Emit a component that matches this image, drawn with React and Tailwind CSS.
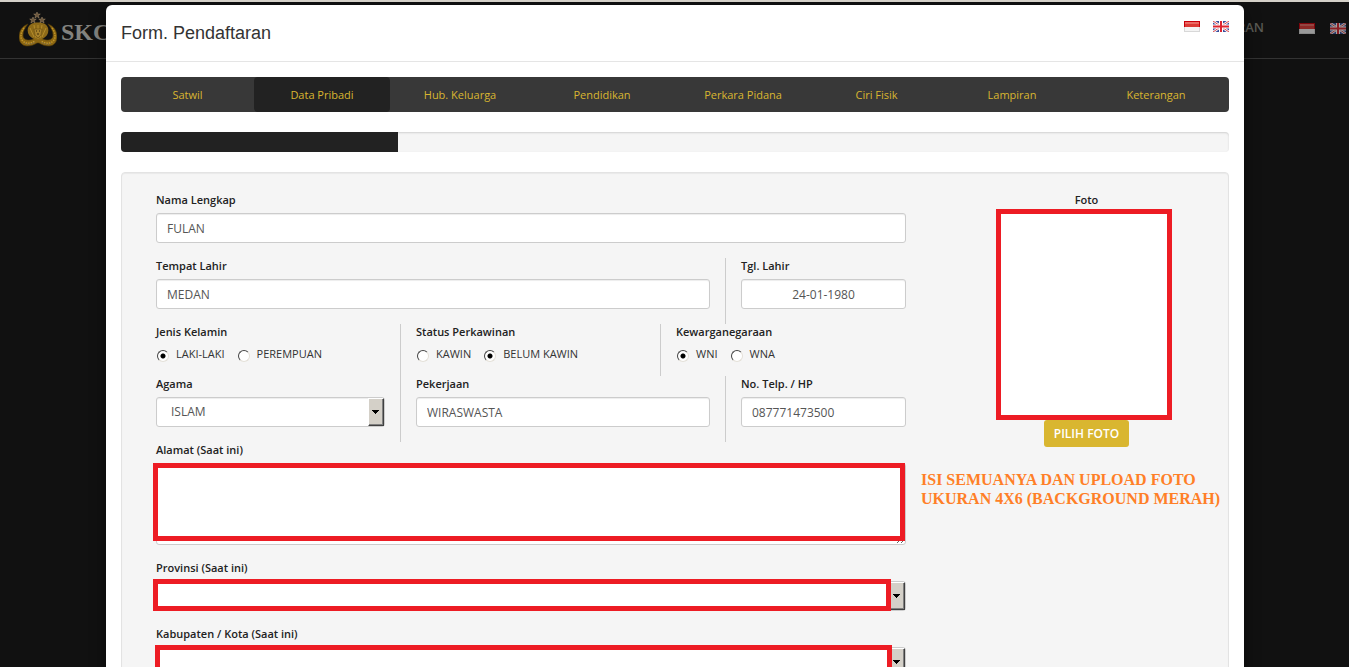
import { useState } from 'react';

const TABS = [
  'Satwil',
  'Data Pribadi',
  'Hub. Keluarga',
  'Pendidikan',
  'Perkara Pidana',
  'Ciri Fisik',
  'Lampiran',
  'Keterangan',
];

const INPUT =
  'block h-[30px] w-full rounded-[3px] border border-[#ccc] bg-white px-2.5 text-[12px] text-[#555] shadow-[inset_0_1px_1px_rgba(0,0,0,0.075)] outline-none';

const FlagId = () => (
  <svg className="h-[11px] w-4" viewBox="0 0 16 11">
    <rect width="16" height="11" fill="#f4f4f4" />
    <rect width="16" height="6" fill="#c8000a" />
    <rect x="1" y="1" width="14" height="5" fill="#dc3a34" />
    <rect x="1" y="1" width="14" height="2" fill="#ea6a64" />
    <path d="M0 10.5h16M15.5 6v5M.5 6v5" stroke="#d8d8d8" />
  </svg>
);

const FlagUk = () => (
  <svg className="h-[11px] w-4" viewBox="0 0 16 11">
    <rect width="16" height="11" fill="#3a4f9c" />
    <path d="M0 0l16 11M16 0L0 11" stroke="#fff" strokeWidth="2.6" />
    <path d="M0 0l16 11M16 0L0 11" stroke="#d8474d" strokeWidth="1" />
    <path d="M8 0v11M0 5.5h16" stroke="#fff" strokeWidth="4" />
    <path d="M8 0v11M0 5.5h16" stroke="#dc2530" strokeWidth="2" />
  </svg>
);

const Emblem = () => (
  <svg className="h-9 w-[38px]" viewBox="0 0 38 36">
    {/* stars */}
    <g fill="#6b563c" stroke="#a08a6a" strokeWidth="0.5">
      <path d="M18 0l.9 2.100h2.400l-1.900 1.500.7 2.300L18 4.600l-2.100 1.300.7-2.300-1.900-1.500h2.400z" />
      <path d="M14 5l.9 2.100h2.400l-1.900 1.500.7 2.300L14 9.600l-2.100 1.300.7-2.300-1.900-1.500h2.400z" />
      <path d="M23 5l.9 2.100h2.400l-1.900 1.500.7 2.300L23 9.600l-2.100 1.300.7-2.300-1.900-1.500h2.400z" />
    </g>
    {/* wreath */}
    <path
      d="M9 12C3 14 0 19 0 25c0 6 4 9 8 9 4 0 7-1 10-3h2c3 2 6 3 10 3 4 0 8-3 8-9 0-6-3-11-9-13 3 4 5 7 5 11 0 4-3 5-6 5-3 0-5-2-9-2s-6 2-9 2-6-1-6-5c0-4 2-7 5-11z"
      fill="#8a6512"
      stroke="#4a3608"
      strokeWidth="0.6"
    />
    <path
      d="M5 16c-3 4-4 9-2 12 3 4 8 4 13 1M33 16c3 4 4 9 2 12-3 4-8 4-13 1"
      fill="none"
      stroke="#c09428"
      strokeWidth="1.500"
      strokeDasharray="1.500 1"
    />
    <path d="M6 31c3 2 7 1 10-1M32 31c-3 2-7 1-10-1" fill="none" stroke="#7d7460" strokeDasharray="1 1" />
    {/* shield */}
    <path d="M12 12c4-2 10-2 14 0 3 2 4 5 3 9-1 3-4 6-10 7-6-1-9-4-10-7-1-4 0-7 3-9z" fill="#8d6a18" />
    <path d="M19 13v14M15 13l2 13M23 13l-2 13M11 16l4 9M27 16l-4 9" stroke="#b8902c" strokeWidth="0.900" />
    <path d="M15 17h8l-1 6-3 3-3-3z" fill="#a8822a" stroke="#5a4210" strokeWidth="0.500" />
    <path d="M17 19h1M20 19h1M18 22h2" stroke="#3a2a06" />
  </svg>
);

const Field = ({ id, label, className, children }) => (
  <div className={`px-[15px] pb-[15px] ${className}`}>
    <label htmlFor={id} className="mb-[5px] block font-semibold leading-4 text-[#222]">
      {label}
    </label>
    {children}
  </div>
);

const SelectBox = ({ id, options }) => (
  <div className="relative">
    <select id={id} className={`${INPUT} appearance-none px-3.5`}>
      {options.map((o) => (
        <option key={o}>{o}</option>
      ))}
    </select>
    <span className="pointer-events-none absolute inset-y-px right-px flex w-4 items-center justify-center border border-t-white border-l-white border-r-[#404040] border-b-[#404040] bg-[#d4d0c8] pr-px shadow-[inset_-1px_-1px_0_#808080]">
      <svg className="h-1 w-[7px]" viewBox="0 0 7 4">
        <path d="M0 0h7v1H6v1H5v1H4v1H3V3H2V2H1V1H0z" />
      </svg>
    </span>
  </div>
);

const RadioGroup = ({ name, label, options, initial, className }) => {
  const [value, setValue] = useState(initial);

  return (
    <div className={`h-[52px] px-[15px] ${className}`}>
      <fieldset>
        <legend className="block font-semibold leading-4 text-[#222]">{label}</legend>
        <div className="flex gap-[13px] pt-1.5 pl-px">
          {options.map((o) => (
            <label key={o} className="flex items-center gap-[7px] leading-4 whitespace-nowrap text-[#333]">
              <input
                type="radio"
                name={name}
                checked={value === o}
                onChange={() => setValue(o)}
                className="mt-[3px] size-3 appearance-none rounded-full border border-t-[#444] border-r-[#e4e0d8] border-b-[#e4e0d8] border-l-[#444] bg-white checked:bg-[radial-gradient(circle,#000_2px,transparent_3px)]"
              />
              {o}
            </label>
          ))}
        </div>
      </fieldset>
    </div>
  );
};

const SiteHeader = () => (
  <header className="flex h-[57px] items-center justify-between border-b border-[#333] pl-[19px] pr-[3px]">
    <a href="#beranda" className="flex items-center gap-1">
      <Emblem />
      <span className="w-14 overflow-hidden pt-1 font-['Liberation_Serif',serif] text-[24px] font-bold text-[#83837f]">
        SKCK
      </span>
    </a>
    <nav className="flex items-center gap-[15px] pb-1">
      <a href="#pendaftaran" className="mr-5 text-[13px] font-semibold text-[#5a5a54]">
        PENDAFTARAN
      </a>
      <button type="button" aria-label="Bahasa Indonesia" className="opacity-60">
        <FlagId />
      </button>
      <button type="button" aria-label="English" className="opacity-60">
        <FlagUk />
      </button>
    </nav>
  </header>
);

const PersonalForm = () => (
  <div className="grid grid-cols-12">
    <Field id="nama" label="Nama Lengkap" className="col-span-12">
      <input id="nama" className={INPUT} defaultValue="FULAN" />
    </Field>

    <Field id="tempat" label="Tempat Lahir" className="col-span-9 border-r border-[#ccc]">
      <input id="tempat" className={INPUT} defaultValue="MEDAN" />
    </Field>
    <Field id="tanggal" label="Tgl. Lahir" className="col-span-3">
      <input id="tanggal" className={`${INPUT} text-center`} defaultValue="24-01-1980" />
    </Field>

    <RadioGroup
      name="kelamin"
      label="Jenis Kelamin"
      options={['LAKI-LAKI', 'PEREMPUAN']}
      initial="LAKI-LAKI"
      className="col-span-4 border-r border-[#ccc]"
    />
    <RadioGroup
      name="status"
      label="Status Perkawinan"
      options={['KAWIN', 'BELUM KAWIN']}
      initial="BELUM KAWIN"
      className="col-span-4 border-r border-[#ccc]"
    />
    <RadioGroup
      name="warga"
      label="Kewarganegaraan"
      options={['WNI', 'WNA']}
      initial="WNI"
      className="col-span-4"
    />

    <Field id="agama" label="Agama" className="col-span-4 border-r border-[#ccc]">
      <SelectBox id="agama" options={['ISLAM', 'KRISTEN', 'KATOLIK', 'HINDU', 'BUDHA']} />
    </Field>
    <Field id="pekerjaan" label="Pekerjaan" className="col-span-5 border-r border-[#ccc]">
      <input id="pekerjaan" className={INPUT} defaultValue="WIRASWASTA" />
    </Field>
    <Field id="telp" label="No. Telp. / HP" className="col-span-3">
      <input id="telp" className={INPUT} defaultValue="087771473500" />
    </Field>

    <Field id="alamat" label="Alamat (Saat ini)" className="col-span-12">
      <div className="relative">
        <textarea id="alamat" className={`${INPUT} h-[82px] resize-y`} />
        <span className="pointer-events-none absolute top-0 right-px bottom-1 -left-[3px] border-5 border-[#ed1c24]" />
      </div>
    </Field>
    <Field id="provinsi" label="Provinsi (Saat ini)" className="col-span-12">
      <div className="relative">
        <SelectBox id="provinsi" options={['']} />
        <span className="pointer-events-none absolute -top-0.5 right-[15px] bottom-0 -left-[3px] border-5 border-[#ed1c24]" />
      </div>
    </Field>
    <Field id="kota" label="Kabupaten / Kota (Saat ini)" className="col-span-12">
      <div className="relative">
        <SelectBox id="kota" options={['']} />
        <span className="pointer-events-none absolute -top-0.5 right-3.5 bottom-0 -left-px border-5 border-[#ed1c24]" />
      </div>
    </Field>
  </div>
);

const PhotoPanel = () => (
  <div>
    <div className="flex flex-col items-center pl-6">
      <span className="font-semibold leading-4 text-[#222]">Foto</span>
      <div className="mt-px mr-1.5 h-[211px] w-44 border-5 border-[#ed1c24] bg-white" />
      <button type="button" className="h-[27px] rounded-[3px] bg-[#d9b630] px-2.5 text-[12px] font-semibold text-white">
        PILIH FOTO
      </button>
    </div>
    <p className="mt-[23px] font-['Liberation_Serif',serif] text-[16px] font-bold leading-[19px] whitespace-nowrap text-[#ff7f27]">
      ISI SEMUANYA DAN UPLOAD FOTO
      <br />
      UKURAN 4X6 (BACKGROUND MERAH)
    </p>
  </div>
);

export default function App() {
  const [active, setActive] = useState('Data Pribadi');

  return (
    <div className="relative h-screen overflow-hidden border-t-2 border-[#d4d0c8] bg-[#111] font-['Open_Sans',sans-serif] text-[11px]">
      <SiteHeader />

      <div className="absolute inset-0 overflow-hidden pt-[3px] pr-[105px] pl-[106px]">
        <div role="dialog" aria-labelledby="judul" className="rounded-t-md bg-white shadow-[0_5px_15px_rgba(0,0,0,0.5)]">
          <div className="flex h-[57px] items-center justify-between border-b border-[#e5e5e5] px-[15px]">
            <h1 id="judul" className="font-['Liberation_Sans',sans-serif] text-[18px] text-[#333]">
              Form. Pendaftaran
            </h1>
            <div className="mb-3.5 flex gap-[13px]">
              <button type="button" aria-label="Bahasa Indonesia">
                <FlagId />
              </button>
              <button type="button" aria-label="English">
                <FlagUk />
              </button>
            </div>
          </div>

          <div className="p-[15px]">
            <nav className="grid h-[35px] grid-cols-[133fr_136fr_140fr_144fr_138fr_129fr_142fr_146fr] rounded bg-[#383838]">
              {TABS.map((tab) => (
                <button
                  key={tab}
                  type="button"
                  onClick={() => setActive(tab)}
                  className={`rounded pt-0.5 text-[#d9b630] ${tab === active ? 'bg-[#222]' : ''}`}
                >
                  {tab}
                </button>
              ))}
            </nav>

            <div className="mt-5 h-5 overflow-hidden rounded bg-[#f5f5f5] shadow-[inset_0_1px_2px_rgba(0,0,0,0.15)]">
              <div className="h-full w-1/4 bg-[#222]" />
            </div>

            <div className="mt-5 grid grid-cols-[780fr_307fr] rounded border border-[#e3e3e3] bg-[#f5f5f5] py-[19px] pl-[19px] shadow-[inset_0_1px_1px_rgba(0,0,0,0.05)]">
              <PersonalForm />
              <PhotoPanel />
            </div>
          </div>
        </div>
      </div>
    </div>
  );
}
